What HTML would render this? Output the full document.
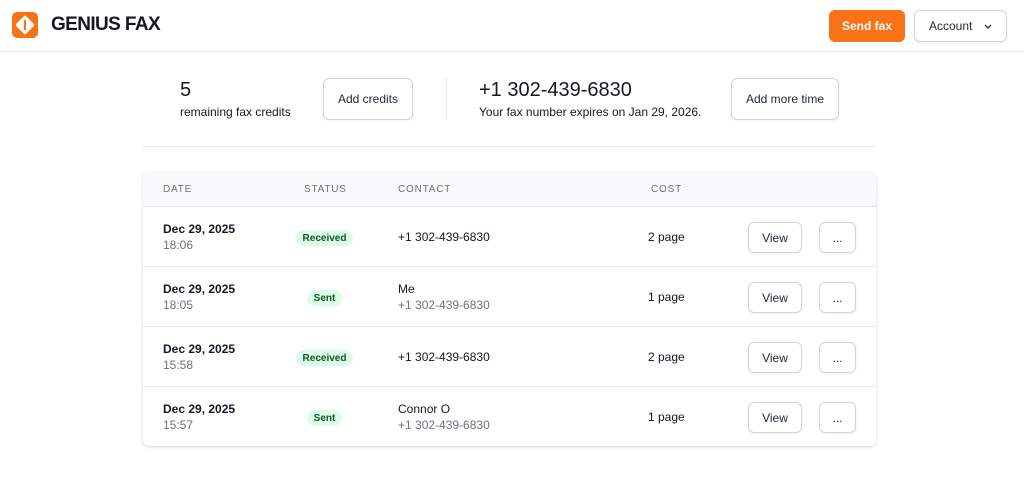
<!DOCTYPE html>
<html><head><style>
*{box-sizing:border-box;margin:0;padding:0}
body{width:1024px;height:498px;background:#fff;font-family:"Liberation Sans",sans-serif;color:#111827;position:relative;overflow:hidden}
.a{position:absolute}
.btn{position:absolute;border:1px solid #d1d5db;border-radius:6px;background:#fff;font-size:12px;color:#1f2937;display:flex;align-items:center;justify-content:center;box-shadow:0 1px 2px rgba(0,0,0,.05)}
.th{position:absolute;top:184px;font-size:10px;letter-spacing:.8px;color:#6b7280}
.row{position:absolute;left:143px;width:733px;height:60px;border-top:1px solid #e5e7eb}
.row .d{position:absolute;left:20px;top:15px;font-size:12px;font-weight:bold;color:#111827}
.row .t{position:absolute;left:20px;top:31px;font-size:12px;color:#6b7280}
.badge{position:absolute;top:23px;height:16px;border-radius:8px;background:#dcfce7;color:#14532d;font-size:10px;font-weight:bold;display:flex;align-items:center;justify-content:center}
.row .c{position:absolute;left:255px;font-size:12px;color:#111827}
.row .c2{position:absolute;left:255px;top:31px;font-size:12px;color:#6b7280}
.row .p{position:absolute;left:505px;top:23px;font-size:12px}
</style></head><body>
<div class="a" style="left:0;top:51px;width:1024px;height:1px;background:#e5e7eb"></div>
<div class="a" style="left:12px;top:12px;width:26px;height:26px;border-radius:5px;background:#f97316"></div>
<div class="a" style="left:18px;top:18px;width:14px;height:14px;background:#fff;transform:rotate(45deg);border-radius:2px"></div>
<div class="a" style="left:24px;top:20px;width:2px;height:10px;background:#f97316"></div>
<div class="a" style="left:51px;top:14px;font-size:19px;font-weight:bold;color:#111827;letter-spacing:-.6px">GENIUS FAX</div>
<div class="btn" style="left:829px;top:10px;width:76px;height:32px;background:#f97316;border-color:#f97316;color:#fff;font-weight:bold">Send fax</div>
<div class="btn" style="left:914px;top:10px;width:93px;height:32px;justify-content:flex-start;padding-left:14px">Account<svg style="position:absolute;left:68px;top:12px" width="10" height="8" viewBox="0 0 10 8"><path d="M2 2l3 3 3-3" fill="none" stroke="#374151" stroke-width="1.5"/></svg></div>

<div class="a" style="left:180px;top:79px;font-size:20px">5</div>
<div class="a" style="left:180px;top:105px;font-size:12px">remaining fax credits</div>
<div class="btn" style="left:323px;top:78px;width:90px;height:42px">Add credits</div>
<div class="a" style="left:446px;top:78px;width:1px;height:42px;background:#e5e7eb"></div>
<div class="a" style="left:479px;top:79px;font-size:20px">+1 302-439-6830</div>
<div class="a" style="left:479px;top:105px;font-size:12px">Your fax number expires on Jan 29, 2026.</div>
<div class="btn" style="left:731px;top:78px;width:108px;height:42px">Add more time</div>
<div class="a" style="left:143px;top:146px;width:733px;height:1px;background:#e5e7eb"></div>

<div class="a" style="left:143px;top:172px;width:733px;height:274px;border-radius:6px;box-shadow:0 1px 3px rgba(0,0,0,.12),0 1px 2px rgba(0,0,0,.06);background:#fff"></div>
<div class="a" style="left:143px;top:172px;width:733px;height:34px;background:#f9fafb;border-radius:6px 6px 0 0"></div>
<div class="th" style="left:163px">DATE</div>
<div class="th" style="left:304px">STATUS</div>
<div class="th" style="left:398px">CONTACT</div>
<div class="th" style="left:651px">COST</div>

<div class="row" style="top:206px"><div class="d">Dec 29, 2025</div><div class="t">18:06</div><div class="badge" style="left:153px;width:57px">Received</div><div class="c" style="top:23px">+1 302-439-6830</div><div class="p">2 page</div><div class="btn" style="left:605px;top:15px;width:54px;height:31px">View</div><div class="btn" style="left:676px;top:15px;width:37px;height:31px">...</div></div>
<div class="row" style="top:266px"><div class="d">Dec 29, 2025</div><div class="t">18:05</div><div class="badge" style="left:164px;width:35px">Sent</div><div class="c" style="top:15px">Me</div><div class="c2">+1 302-439-6830</div><div class="p">1 page</div><div class="btn" style="left:605px;top:15px;width:54px;height:31px">View</div><div class="btn" style="left:676px;top:15px;width:37px;height:31px">...</div></div>
<div class="row" style="top:326px"><div class="d">Dec 29, 2025</div><div class="t">15:58</div><div class="badge" style="left:153px;width:57px">Received</div><div class="c" style="top:23px">+1 302-439-6830</div><div class="p">2 page</div><div class="btn" style="left:605px;top:15px;width:54px;height:31px">View</div><div class="btn" style="left:676px;top:15px;width:37px;height:31px">...</div></div>
<div class="row" style="top:386px"><div class="d">Dec 29, 2025</div><div class="t">15:57</div><div class="badge" style="left:164px;width:35px">Sent</div><div class="c" style="top:15px">Connor O</div><div class="c2">+1 302-439-6830</div><div class="p">1 page</div><div class="btn" style="left:605px;top:15px;width:54px;height:31px">View</div><div class="btn" style="left:676px;top:15px;width:37px;height:31px">...</div></div>
</body></html>
